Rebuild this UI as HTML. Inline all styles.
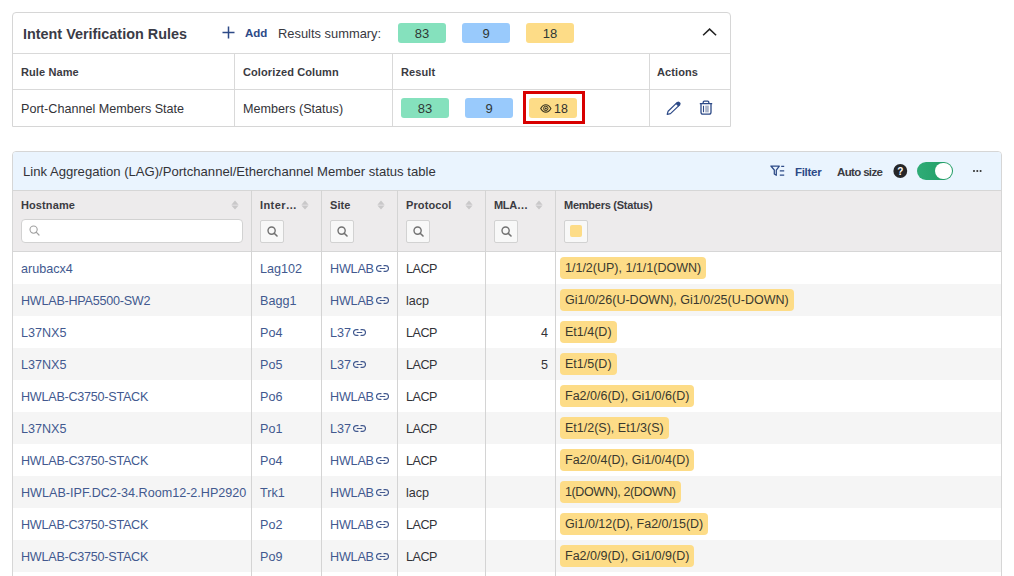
<!DOCTYPE html>
<html><head><meta charset="utf-8"><style>
*{box-sizing:border-box;margin:0;padding:0}
html,body{width:1014px;height:576px;overflow:hidden;background:#fff;font-family:"Liberation Sans",sans-serif;color:#2f2f36}
.a{position:absolute}
.t{position:absolute;white-space:nowrap;line-height:14px}
.hl{position:absolute;background:#d9d9d9}
.badge{position:absolute;height:20px;width:48px;border-radius:3px;font-size:13px;text-align:center;line-height:22px;color:#303836}
.g{background:#85e1bd}.b{background:#99cafc}.y{background:#fddc87}
.th{font-weight:bold;font-size:11px;color:#3b3b42;letter-spacing:0.1px}
.cell{font-size:12.6px;color:#333338}
.link{color:#42598f}
.mem{position:absolute;left:560px;height:22px;border-radius:4px;background:#fddc87;font-size:12.5px;line-height:22px;padding:0 5px;color:#39392f;white-space:nowrap}
.sort{position:absolute;width:7px;height:9px}
.sbox{position:absolute;top:220px;width:24px;height:23px;border:1px solid #d2d2d2;border-radius:2px;background:#f8f8f8}
.lnk{position:absolute}
</style></head><body>
<div class="a" style="left:12px;top:12px;width:719px;height:115px;border:1px solid #d6d6d6;border-radius:4px 4px 0 0"></div>
<div class="hl" style="left:13px;top:53px;width:717px;height:1px"></div>
<div class="hl" style="left:13px;top:89px;width:717px;height:1px"></div>
<div class="hl" style="left:234px;top:54px;width:1px;height:72px"></div>
<div class="hl" style="left:392px;top:54px;width:1px;height:72px"></div>
<div class="hl" style="left:649px;top:54px;width:1px;height:72px"></div>
<div class="t" style="left:23px;top:27px;font-size:14.4px;font-weight:bold;color:#3a3b46">Intent Verification Rules</div>
<svg class="a" style="left:222px;top:26px" width="13" height="13" viewBox="0 0 13 13"><path d="M6.5 0.5v12M0.5 6.5h12" stroke="#2d4a87" stroke-width="1.5"/></svg>
<div class="t" style="left:245px;top:26px;font-size:11.5px;font-weight:bold;color:#2d4a87">Add</div>
<div class="t" style="left:278px;top:27px;font-size:12.9px;color:#38383f">Results summary:</div>
<div class="badge g" style="left:398px;top:23px">83</div>
<div class="badge b" style="left:462px;top:23px">9</div>
<div class="badge y" style="left:526px;top:23px">18</div>
<svg class="a" style="left:701px;top:27px" width="17" height="10" viewBox="0 0 17 10"><path d="M2.1 8.3L8.6 2.1L15.1 8.3" fill="none" stroke="#222" stroke-width="1.5"/></svg>
<div class="t th" style="left:21px;top:65px">Rule Name</div>
<div class="t th" style="left:243px;top:65px">Colorized Column</div>
<div class="t th" style="left:401px;top:65px">Result</div>
<div class="t th" style="left:657px;top:65px">Actions</div>
<div class="t cell" style="left:21px;top:102px">Port-Channel Members State</div>
<div class="t cell" style="left:243px;top:102px">Members (Status)</div>
<div class="badge g" style="left:401px;top:98px">83</div>
<div class="badge b" style="left:465px;top:98px">9</div>
<div class="a" style="left:523px;top:91px;width:62px;height:33px;border:3px solid #d80000"></div>
<div class="badge y" style="left:529px;top:98px"></div>
<svg class="a" style="left:540px;top:104px" width="12" height="9" viewBox="0 0 12 9"><path d="M0.7 4.4C2.3 1.6 4 0.7 5.8 0.7S9.3 1.6 10.9 4.4C9.3 7.2 7.6 8.1 5.8 8.1S2.3 7.2 0.7 4.4Z" fill="none" stroke="#3a3520" stroke-width="1.1"/><circle cx="5.8" cy="4.4" r="2.2" fill="none" stroke="#3a3520" stroke-width="1"/><circle cx="5.8" cy="4.5" r="1.1" fill="#333"/></svg>
<div class="t" style="left:554px;top:102px;font-size:12.4px;color:#303030">18</div>
<svg class="a" style="left:665px;top:100px" width="17" height="17" viewBox="0 0 17 17"><path d="M2.2 14.4L3.1 11.2L12.3 2.4L14.7 4.9L5.5 13.6Z" fill="none" stroke="#2d4a87" stroke-width="1.2" stroke-linejoin="round"/><path d="M10.6 3.8L12.6 1.9Q13.5 1.1 14.4 1.9L15.3 2.8Q16.1 3.7 15.3 4.6L13.3 6.5Z" fill="#2d4a87"/></svg>
<svg class="a" style="left:699px;top:100px" width="14" height="16" viewBox="0 0 14 16"><path d="M4.2 3.4V2.2Q4.2 1.1 5.3 1.1H8.7Q9.8 1.1 9.8 2.2V3.4M0.8 3.7H13.2M2 4V12.2Q2 14.1 4 14.1H10Q12 14.1 12 12.2V4" fill="none" stroke="#2d4a87" stroke-width="1.3"/><path d="M4.5 5.8v6.4" stroke="#2d4a87" stroke-width="1.1"/><rect x="6.2" y="5.6" width="3.6" height="6.8" fill="#aab4c9"/></svg>
<div class="a" style="left:12px;top:151px;width:990px;height:440px;border:1px solid #d6d6d6;border-radius:4px;overflow:hidden"><div class="a" style="left:0;top:0;width:988px;height:39px;background:#eaf4fe;border-bottom:1px solid #d6d6d6"></div><div class="a" style="left:0;top:39px;width:988px;height:61px;background:#edebec;border-bottom:1px solid #d6d6d6"></div><div class="a" style="left:0;top:100px;width:988px;height:32px;background:#ffffff"></div><div class="a" style="left:0;top:132px;width:988px;height:32px;background:#f5f5f5"></div><div class="a" style="left:0;top:164px;width:988px;height:32px;background:#ffffff"></div><div class="a" style="left:0;top:196px;width:988px;height:32px;background:#f5f5f5"></div><div class="a" style="left:0;top:228px;width:988px;height:32px;background:#ffffff"></div><div class="a" style="left:0;top:260px;width:988px;height:32px;background:#f5f5f5"></div><div class="a" style="left:0;top:292px;width:988px;height:32px;background:#ffffff"></div><div class="a" style="left:0;top:324px;width:988px;height:32px;background:#f5f5f5"></div><div class="a" style="left:0;top:356px;width:988px;height:32px;background:#ffffff"></div><div class="a" style="left:0;top:388px;width:988px;height:32px;background:#f5f5f5"></div><div class="a" style="left:0;top:420px;width:988px;height:32px;background:#ffffff"></div></div>
<div class="hl" style="left:251px;top:190px;width:1px;height:386px;background:#d4d4d4"></div>
<div class="hl" style="left:321px;top:190px;width:1px;height:386px;background:#d4d4d4"></div>
<div class="hl" style="left:397px;top:190px;width:1px;height:386px;background:#d4d4d4"></div>
<div class="hl" style="left:485px;top:190px;width:1px;height:386px;background:#d4d4d4"></div>
<div class="hl" style="left:555px;top:190px;width:1px;height:386px;background:#d4d4d4"></div>
<div class="t" style="left:23px;top:165px;font-size:13.1px;color:#333338">Link Aggregation (LAG)/Portchannel/Etherchannel Member status table</div>
<svg class="a" style="left:769px;top:164px" width="17" height="13" viewBox="0 0 17 13"><path d="M1.9 2H10.3L7.3 6V11.3L5.3 10V6Z" fill="none" stroke="#2d4a87" stroke-width="1.25" stroke-linejoin="round"/><path d="M12.2 2.3h3M10.8 6.8h4.4M10.8 11.2h4.4" stroke="#2d4a87" stroke-width="1.25"/></svg>
<div class="t" style="left:795px;top:164.5px;font-size:11.5px;letter-spacing:-0.3px;font-weight:bold;color:#2d4a87">Filter</div>
<div class="t" style="left:837px;top:164.5px;font-size:11.5px;letter-spacing:-0.65px;font-weight:bold;color:#3b3b42">Auto size</div>
<svg class="a" style="left:893px;top:164px" width="15" height="15" viewBox="0 0 15 15"><circle cx="7.3" cy="7" r="6.9" fill="#262628"/><text x="7.3" y="10.6" font-family="Liberation Sans" font-weight="bold" font-size="10" fill="#fff" text-anchor="middle">?</text></svg>
<div class="a" style="left:917px;top:162px;width:36px;height:18px;border-radius:9px;background:linear-gradient(90deg,#2fac77,#1f9b63)"></div>
<div class="a" style="left:935px;top:163px;width:17px;height:16px;border-radius:8px;background:#fff"></div>
<svg class="a" style="left:972px;top:169px" width="11" height="4" viewBox="0 0 11 4"><circle cx="2" cy="2" r="1.05" fill="#333"/><circle cx="5.3" cy="2" r="1.05" fill="#333"/><circle cx="8.6" cy="2" r="1.05" fill="#333"/></svg>
<div class="t th" style="left:21px;top:198px">Hostname</div>
<div class="t th" style="left:260px;top:198px"><span style="letter-spacing:0.4px">Inter…</span></div>
<div class="t th" style="left:330px;top:198px">Site</div>
<div class="t th" style="left:406px;top:198px">Protocol</div>
<div class="t th" style="left:494px;top:198px"><span style="letter-spacing:-0.3px">MLA…</span></div>
<div class="t th" style="left:564px;top:198px"><span style="letter-spacing:-0.25px">Members (Status)</span></div>
<svg class="a" style="left:231px;top:200px" width="8" height="10" viewBox="0 0 8 10"><path d="M4 0.6L7.6 4.7H0.4Z M0.4 5.6H7.6L4 9.4Z" fill="#c9c8c9"/></svg>
<svg class="a" style="left:301px;top:200px" width="8" height="10" viewBox="0 0 8 10"><path d="M4 0.6L7.6 4.7H0.4Z M0.4 5.6H7.6L4 9.4Z" fill="#c9c8c9"/></svg>
<svg class="a" style="left:377px;top:200px" width="8" height="10" viewBox="0 0 8 10"><path d="M4 0.6L7.6 4.7H0.4Z M0.4 5.6H7.6L4 9.4Z" fill="#c9c8c9"/></svg>
<svg class="a" style="left:465px;top:200px" width="8" height="10" viewBox="0 0 8 10"><path d="M4 0.6L7.6 4.7H0.4Z M0.4 5.6H7.6L4 9.4Z" fill="#c9c8c9"/></svg>
<svg class="a" style="left:535px;top:200px" width="8" height="10" viewBox="0 0 8 10"><path d="M4 0.6L7.6 4.7H0.4Z M0.4 5.6H7.6L4 9.4Z" fill="#c9c8c9"/></svg>
<div class="a" style="left:21px;top:219px;width:222px;height:24px;border:1px solid #d2d2d2;border-radius:4px;background:#fff"></div>
<svg class="a" style="left:29px;top:225px" width="11" height="11" viewBox="0 0 11 11"><circle cx="4.6" cy="4.6" r="3.6" fill="none" stroke="#a0a0a0" stroke-width="1.1"/><path d="M7.2 7.2L10 10" stroke="#a0a0a0" stroke-width="1.2" stroke-linecap="round"/></svg>
<div class="sbox" style="left:260px"></div>
<svg class="a" style="left:267px;top:226px" width="11" height="11" viewBox="0 0 11 11"><circle cx="4.6" cy="4.6" r="3.6" fill="none" stroke="#727272" stroke-width="1.4"/><path d="M7.2 7.2L10 10" stroke="#727272" stroke-width="1.6" stroke-linecap="round"/></svg>
<div class="sbox" style="left:330px"></div>
<svg class="a" style="left:337px;top:226px" width="11" height="11" viewBox="0 0 11 11"><circle cx="4.6" cy="4.6" r="3.6" fill="none" stroke="#727272" stroke-width="1.4"/><path d="M7.2 7.2L10 10" stroke="#727272" stroke-width="1.6" stroke-linecap="round"/></svg>
<div class="sbox" style="left:406px"></div>
<svg class="a" style="left:413px;top:226px" width="11" height="11" viewBox="0 0 11 11"><circle cx="4.6" cy="4.6" r="3.6" fill="none" stroke="#727272" stroke-width="1.4"/><path d="M7.2 7.2L10 10" stroke="#727272" stroke-width="1.6" stroke-linecap="round"/></svg>
<div class="sbox" style="left:494px"></div>
<svg class="a" style="left:501px;top:226px" width="11" height="11" viewBox="0 0 11 11"><circle cx="4.6" cy="4.6" r="3.6" fill="none" stroke="#727272" stroke-width="1.4"/><path d="M7.2 7.2L10 10" stroke="#727272" stroke-width="1.6" stroke-linecap="round"/></svg>
<div class="sbox" style="left:564px"></div>
<div class="a" style="left:570px;top:225px;width:12px;height:12px;border-radius:2px;background:#fddc87"></div>
<div class="t cell link" style="left:21px;top:262px;letter-spacing:0">arubacx4</div><div class="t cell link" style="left:260px;top:262px">Lag102</div><div class="t cell link" style="left:330px;top:262px"><span style="letter-spacing:-0.2px">HWLAB</span><svg style="margin-left:2px;vertical-align:1px" width="13" height="7" viewBox="0 0 13 7"><path d="M5 0.7H3.3a2.8 2.8 0 0 0 0 5.6H5M8 0.7h1.7a2.8 2.8 0 0 1 0 5.6H8M4.2 3.5h4.6" fill="none" stroke="#42598f" stroke-width="1.2" stroke-linecap="round"/></svg></div><div class="t cell" style="left:406px;top:262px;letter-spacing:-0.5px">LACP</div><div class="mem" style="top:257px;">1/1/2(UP), 1/1/1(DOWN)</div>
<div class="t cell link" style="left:21px;top:294px;letter-spacing:-0.25px">HWLAB-HPA5500-SW2</div><div class="t cell link" style="left:260px;top:294px">Bagg1</div><div class="t cell link" style="left:330px;top:294px"><span style="letter-spacing:-0.2px">HWLAB</span><svg style="margin-left:2px;vertical-align:1px" width="13" height="7" viewBox="0 0 13 7"><path d="M5 0.7H3.3a2.8 2.8 0 0 0 0 5.6H5M8 0.7h1.7a2.8 2.8 0 0 1 0 5.6H8M4.2 3.5h4.6" fill="none" stroke="#42598f" stroke-width="1.2" stroke-linecap="round"/></svg></div><div class="t cell" style="left:406px;top:294px;letter-spacing:0">lacp</div><div class="mem" style="top:289px;">Gi1/0/26(U-DOWN), Gi1/0/25(U-DOWN)</div>
<div class="t cell link" style="left:21px;top:326px;letter-spacing:0">L37NX5</div><div class="t cell link" style="left:260px;top:326px">Po4</div><div class="t cell link" style="left:330px;top:326px"><span style="letter-spacing:0">L37</span><svg style="margin-left:2px;vertical-align:1px" width="13" height="7" viewBox="0 0 13 7"><path d="M5 0.7H3.3a2.8 2.8 0 0 0 0 5.6H5M8 0.7h1.7a2.8 2.8 0 0 1 0 5.6H8M4.2 3.5h4.6" fill="none" stroke="#42598f" stroke-width="1.2" stroke-linecap="round"/></svg></div><div class="t cell" style="left:406px;top:326px;letter-spacing:-0.5px">LACP</div><div class="t cell" style="left:487px;width:61px;text-align:right;top:326px">4</div><div class="mem" style="top:321px;">Et1/4(D)</div>
<div class="t cell link" style="left:21px;top:358px;letter-spacing:0">L37NX5</div><div class="t cell link" style="left:260px;top:358px">Po5</div><div class="t cell link" style="left:330px;top:358px"><span style="letter-spacing:0">L37</span><svg style="margin-left:2px;vertical-align:1px" width="13" height="7" viewBox="0 0 13 7"><path d="M5 0.7H3.3a2.8 2.8 0 0 0 0 5.6H5M8 0.7h1.7a2.8 2.8 0 0 1 0 5.6H8M4.2 3.5h4.6" fill="none" stroke="#42598f" stroke-width="1.2" stroke-linecap="round"/></svg></div><div class="t cell" style="left:406px;top:358px;letter-spacing:-0.5px">LACP</div><div class="t cell" style="left:487px;width:61px;text-align:right;top:358px">5</div><div class="mem" style="top:353px;">Et1/5(D)</div>
<div class="t cell link" style="left:21px;top:390px;letter-spacing:-0.25px">HWLAB-C3750-STACK</div><div class="t cell link" style="left:260px;top:390px">Po6</div><div class="t cell link" style="left:330px;top:390px"><span style="letter-spacing:-0.2px">HWLAB</span><svg style="margin-left:2px;vertical-align:1px" width="13" height="7" viewBox="0 0 13 7"><path d="M5 0.7H3.3a2.8 2.8 0 0 0 0 5.6H5M8 0.7h1.7a2.8 2.8 0 0 1 0 5.6H8M4.2 3.5h4.6" fill="none" stroke="#42598f" stroke-width="1.2" stroke-linecap="round"/></svg></div><div class="t cell" style="left:406px;top:390px;letter-spacing:-0.5px">LACP</div><div class="mem" style="top:385px;">Fa2/0/6(D), Gi1/0/6(D)</div>
<div class="t cell link" style="left:21px;top:422px;letter-spacing:0">L37NX5</div><div class="t cell link" style="left:260px;top:422px">Po1</div><div class="t cell link" style="left:330px;top:422px"><span style="letter-spacing:0">L37</span><svg style="margin-left:2px;vertical-align:1px" width="13" height="7" viewBox="0 0 13 7"><path d="M5 0.7H3.3a2.8 2.8 0 0 0 0 5.6H5M8 0.7h1.7a2.8 2.8 0 0 1 0 5.6H8M4.2 3.5h4.6" fill="none" stroke="#42598f" stroke-width="1.2" stroke-linecap="round"/></svg></div><div class="t cell" style="left:406px;top:422px;letter-spacing:-0.5px">LACP</div><div class="mem" style="top:417px;">Et1/2(S), Et1/3(S)</div>
<div class="t cell link" style="left:21px;top:454px;letter-spacing:-0.25px">HWLAB-C3750-STACK</div><div class="t cell link" style="left:260px;top:454px">Po4</div><div class="t cell link" style="left:330px;top:454px"><span style="letter-spacing:-0.2px">HWLAB</span><svg style="margin-left:2px;vertical-align:1px" width="13" height="7" viewBox="0 0 13 7"><path d="M5 0.7H3.3a2.8 2.8 0 0 0 0 5.6H5M8 0.7h1.7a2.8 2.8 0 0 1 0 5.6H8M4.2 3.5h4.6" fill="none" stroke="#42598f" stroke-width="1.2" stroke-linecap="round"/></svg></div><div class="t cell" style="left:406px;top:454px;letter-spacing:-0.5px">LACP</div><div class="mem" style="top:449px;">Fa2/0/4(D), Gi1/0/4(D)</div>
<div class="t cell link" style="left:21px;top:486px;letter-spacing:0">HWLAB-IPF.DC2-34.Room12-2.HP2920</div><div class="t cell link" style="left:260px;top:486px">Trk1</div><div class="t cell link" style="left:330px;top:486px"><span style="letter-spacing:-0.2px">HWLAB</span><svg style="margin-left:2px;vertical-align:1px" width="13" height="7" viewBox="0 0 13 7"><path d="M5 0.7H3.3a2.8 2.8 0 0 0 0 5.6H5M8 0.7h1.7a2.8 2.8 0 0 1 0 5.6H8M4.2 3.5h4.6" fill="none" stroke="#42598f" stroke-width="1.2" stroke-linecap="round"/></svg></div><div class="t cell" style="left:406px;top:486px;letter-spacing:0">lacp</div><div class="mem" style="top:481px;letter-spacing:-0.38px;">1(DOWN), 2(DOWN)</div>
<div class="t cell link" style="left:21px;top:518px;letter-spacing:-0.25px">HWLAB-C3750-STACK</div><div class="t cell link" style="left:260px;top:518px">Po2</div><div class="t cell link" style="left:330px;top:518px"><span style="letter-spacing:-0.2px">HWLAB</span><svg style="margin-left:2px;vertical-align:1px" width="13" height="7" viewBox="0 0 13 7"><path d="M5 0.7H3.3a2.8 2.8 0 0 0 0 5.6H5M8 0.7h1.7a2.8 2.8 0 0 1 0 5.6H8M4.2 3.5h4.6" fill="none" stroke="#42598f" stroke-width="1.2" stroke-linecap="round"/></svg></div><div class="t cell" style="left:406px;top:518px;letter-spacing:-0.5px">LACP</div><div class="mem" style="top:513px;">Gi1/0/12(D), Fa2/0/15(D)</div>
<div class="t cell link" style="left:21px;top:550px;letter-spacing:-0.25px">HWLAB-C3750-STACK</div><div class="t cell link" style="left:260px;top:550px">Po9</div><div class="t cell link" style="left:330px;top:550px"><span style="letter-spacing:-0.2px">HWLAB</span><svg style="margin-left:2px;vertical-align:1px" width="13" height="7" viewBox="0 0 13 7"><path d="M5 0.7H3.3a2.8 2.8 0 0 0 0 5.6H5M8 0.7h1.7a2.8 2.8 0 0 1 0 5.6H8M4.2 3.5h4.6" fill="none" stroke="#42598f" stroke-width="1.2" stroke-linecap="round"/></svg></div><div class="t cell" style="left:406px;top:550px;letter-spacing:-0.5px">LACP</div><div class="mem" style="top:545px;">Fa2/0/9(D), Gi1/0/9(D)</div>
</body></html>
